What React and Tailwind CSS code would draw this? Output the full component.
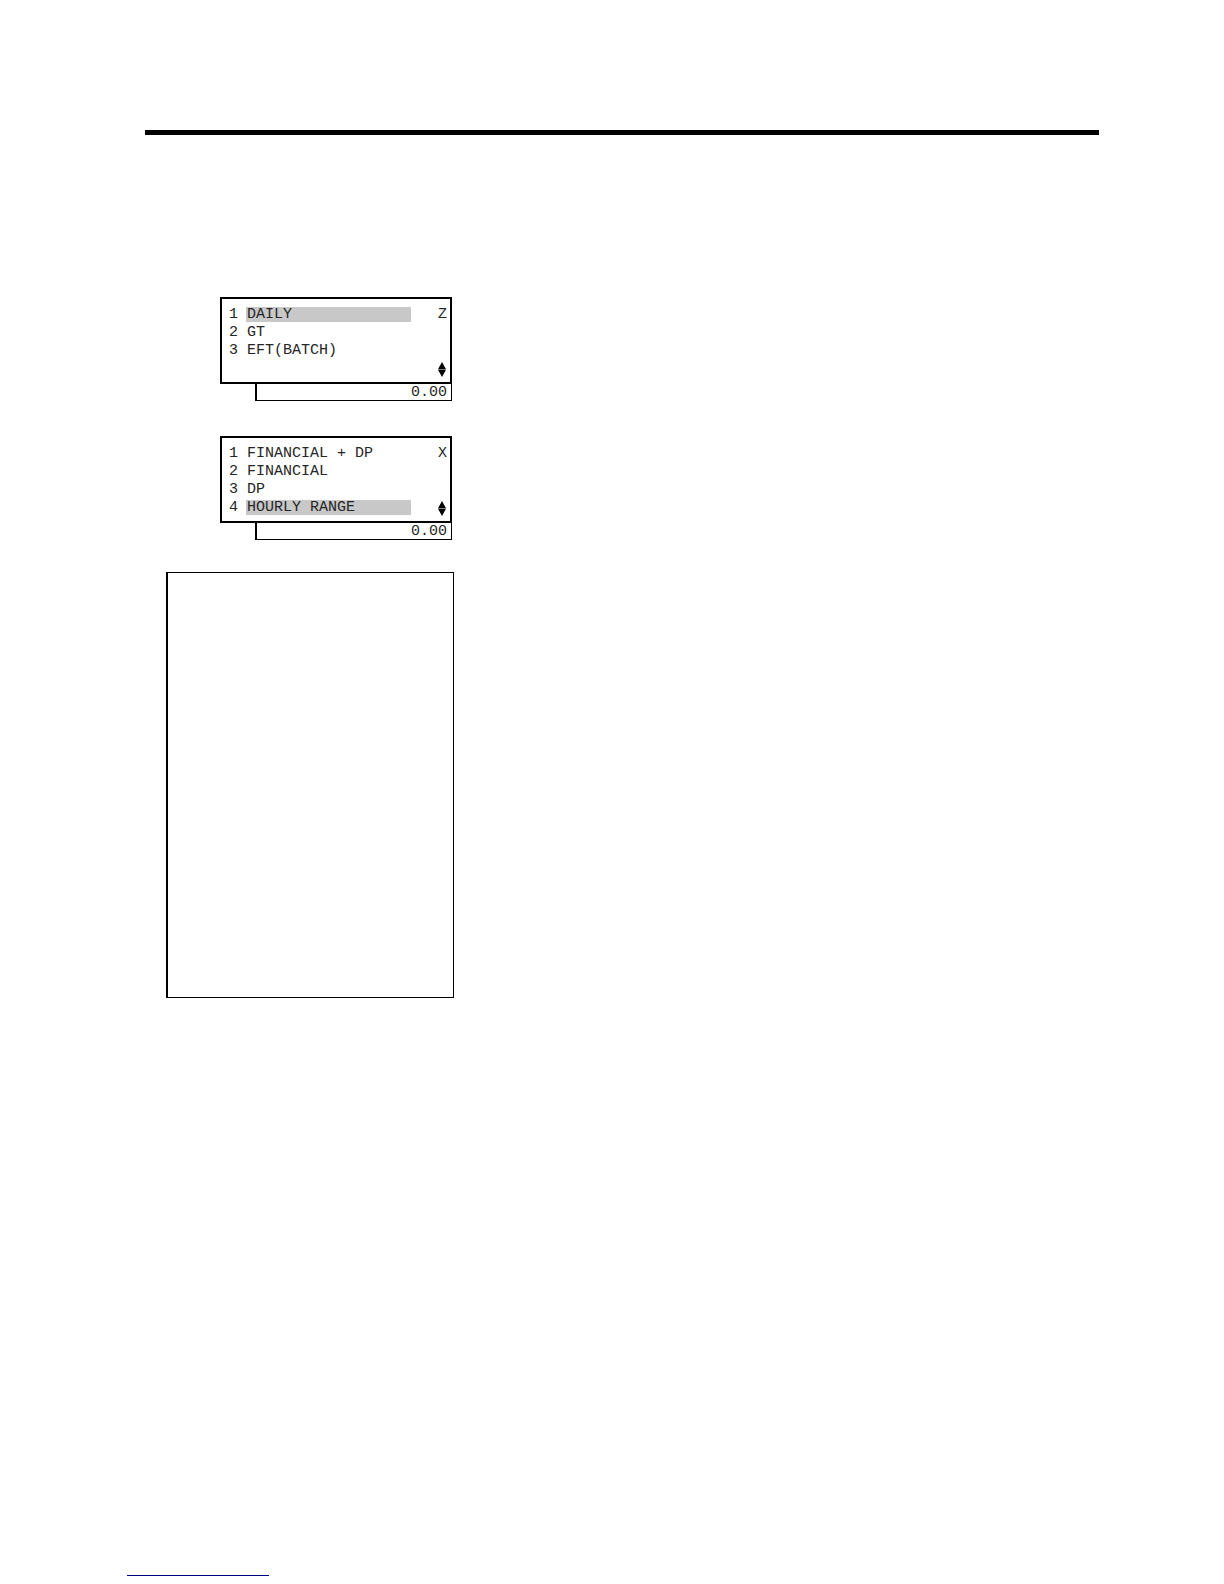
const DISPLAYS = [
  {
    mode: 'Z',
    items: ['DAILY', 'GT', 'EFT(BATCH)'],
    selected: 0,
    amount: '0.00',
  },
  {
    mode: 'X',
    items: ['FINANCIAL + DP', 'FINANCIAL', 'DP', 'HOURLY RANGE'],
    selected: 3,
    amount: '0.00',
  },
]

function ScrollArrows() {
  return (
    <svg viewBox="0 0 8 15" className="w-2 h-[15px]" aria-hidden="true">
      <path d="M4 0 L8 7.2 H0 Z M0 7.8 H8 L4 15 Z" fill="#000" />
    </svg>
  )
}

function Display({ mode, items, selected, amount }) {
  return (
    <section className="w-[232px] text-[15px] leading-[18px] text-neutral-800">
      <div className="flex justify-between h-[87px] border-2 border-black pt-[7px] pl-[7px] pr-[3px]">
        <ol>
          {items.map((item, idx) => (
            <li key={item} className="flex items-start gap-2 h-[18px]">
              <span>{idx + 1}</span>
              <span
                className={`w-[165px] h-[15px] leading-4 mt-px pl-px whitespace-nowrap ${
                  idx === selected ? 'bg-[#c8c8c8]' : ''
                }`}
              >
                {item}
              </span>
            </li>
          ))}
        </ol>
        <div className="flex flex-col items-center justify-between h-[71px]">
          <span>{mode}</span>
          <ScrollArrows />
        </div>
      </div>
      <div className="ml-[35px] h-[17px] border-l-2 border-r border-b border-black pr-1 text-right">
        {amount}
      </div>
    </section>
  )
}

export default function App() {
  return (
    <div className="min-h-screen flex flex-col bg-white font-['Liberation_Mono',monospace]">
      <main className="flex-1 pt-[130px] pl-[145px] pr-[125px]">
        <hr className="h-[5px] border-0 bg-black" />
        <div className="w-[309px] pt-[162px] pl-[21px]">
          <div className="flex flex-col gap-[35px] pl-[54px]">
            {DISPLAYS.map((display) => (
              <Display key={display.mode} {...display} />
            ))}
          </div>
          <div className="mt-8 h-[426px] border border-l-2 border-black" />
        </div>
      </main>
      <footer className="flex pl-[127px] pb-2">
        <a href="#top" aria-label="Back to top" className="w-[142px] h-4 border-b border-[#000080]" />
      </footer>
    </div>
  )
}
